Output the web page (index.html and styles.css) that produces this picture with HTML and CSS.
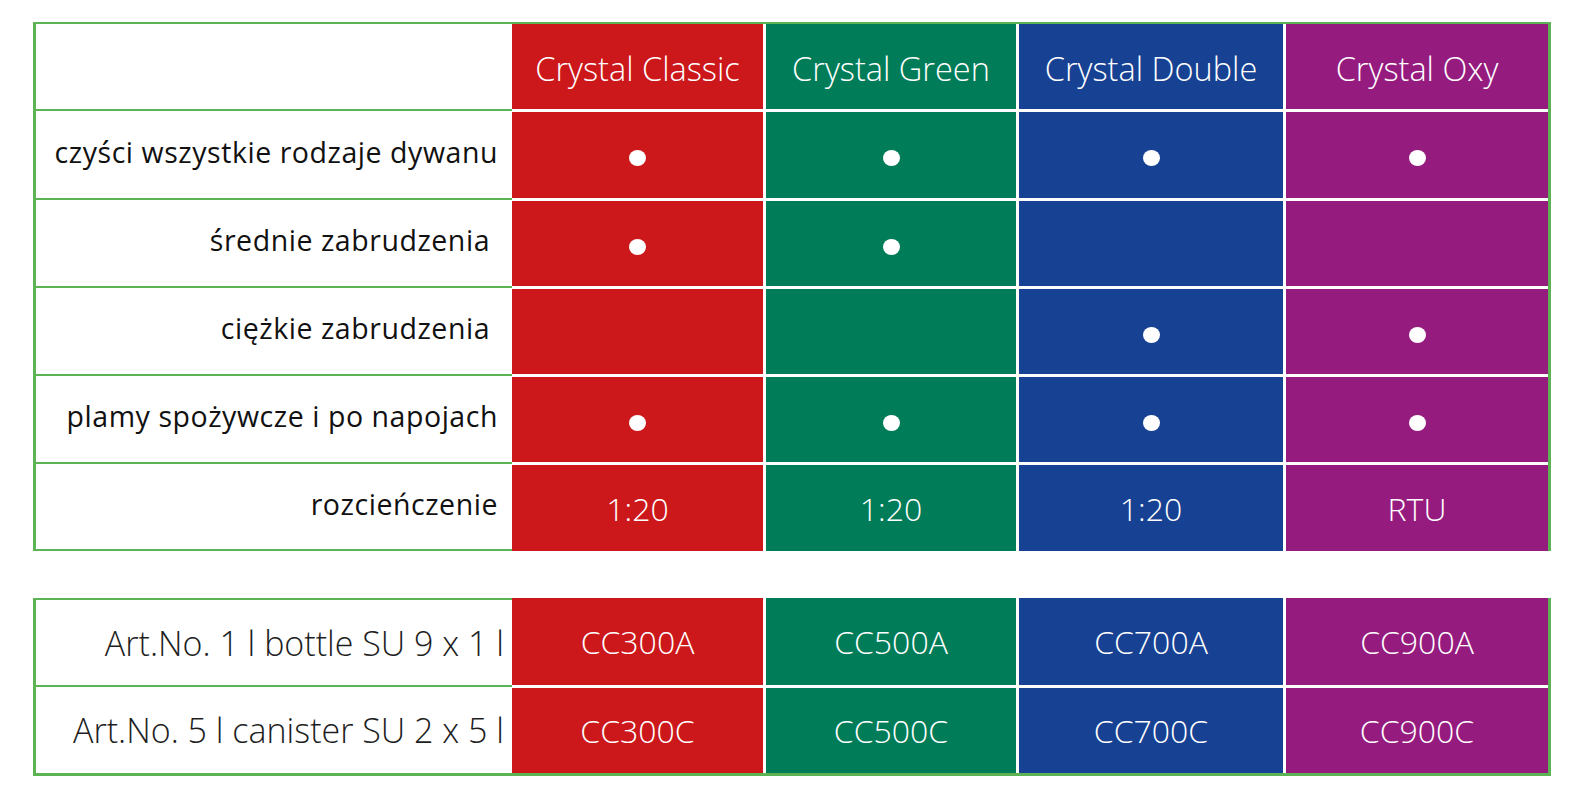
FILE: index.html
```html
<!DOCTYPE html>
<html lang="pl">
<head>
<meta charset="utf-8">
<title>Crystal</title>
<link rel="stylesheet" href="styles.css">
</head>
<body>
<div class="page">
  <div class="tbl tbl-top">
    <div class="row">
      <div class="cell label"></div>
      <div class="cell head red">Crystal Classic</div>
      <div class="cell head green">Crystal Green</div>
      <div class="cell head blue">Crystal Double</div>
      <div class="cell head purple">Crystal Oxy</div>
    </div>
    <div class="row">
      <div class="cell label">czyści wszystkie rodzaje dywanu</div>
      <div class="cell red"><span class="dot"></span></div>
      <div class="cell green"><span class="dot"></span></div>
      <div class="cell blue"><span class="dot"></span></div>
      <div class="cell purple"><span class="dot"></span></div>
    </div>
    <div class="row">
      <div class="cell label">średnie zabrudzenia&nbsp;</div>
      <div class="cell red"><span class="dot"></span></div>
      <div class="cell green"><span class="dot"></span></div>
      <div class="cell blue"></div>
      <div class="cell purple"></div>
    </div>
    <div class="row">
      <div class="cell label">ciężkie zabrudzenia&nbsp;</div>
      <div class="cell red"></div>
      <div class="cell green"></div>
      <div class="cell blue"><span class="dot"></span></div>
      <div class="cell purple"><span class="dot"></span></div>
    </div>
    <div class="row">
      <div class="cell label">plamy spożywcze i po napojach</div>
      <div class="cell red"><span class="dot"></span></div>
      <div class="cell green"><span class="dot"></span></div>
      <div class="cell blue"><span class="dot"></span></div>
      <div class="cell purple"><span class="dot"></span></div>
    </div>
    <div class="row last">
      <div class="cell label">rozcieńczenie</div>
      <div class="cell val red">1:20</div>
      <div class="cell val green">1:20</div>
      <div class="cell val blue">1:20</div>
      <div class="cell val purple">RTU</div>
    </div>
  </div>

  <div class="tbl tbl-bottom">
    <div class="row first">
      <div class="cell label art">Art.No. 1 l bottle SU 9 x 1 l</div>
      <div class="cell val red">CC300A</div>
      <div class="cell val green">CC500A</div>
      <div class="cell val blue">CC700A</div>
      <div class="cell val purple">CC900A</div>
    </div>
    <div class="row">
      <div class="cell label art">Art.No. 5 l canister SU 2 x 5 l</div>
      <div class="cell val red">CC300C</div>
      <div class="cell val green">CC500C</div>
      <div class="cell val blue">CC700C</div>
      <div class="cell val purple">CC900C</div>
    </div>
  </div>
</div>
</body>
</html>
```

FILE: styles.css
```css
html, body {
  margin: 0;
  padding: 0;
  background: #ffffff;
}

.page {
  padding: 22px 0 0 33px;
}

.tbl {
  display: grid;
  box-sizing: border-box;
  width: 1518px;
  grid-template-columns: 479px 251px 253px 267px 265px;
  border-right: 3px solid #5cb353;
}

.tbl-top {
  border-top: 2px solid #5cb353;
  grid-template-rows: 85px 89px 88px 88px 88px 89px;
}

.tbl-bottom {
  margin-top: 47px;
  border-bottom: 3px solid #5cb353;
  grid-template-rows: 87px 88px;
}

.row {
  display: contents;
}

.cell {
  box-sizing: border-box;
  display: flex;
  align-items: center;
  justify-content: center;
  font-family: "Open Sans", "Liberation Sans", sans-serif;
  font-weight: 300;
  font-size: 32px;
  color: #ffffff;
  white-space: nowrap;
}

.head {
  font-size: 32.5px;
  padding-top: 4px;
}

.label {
  justify-content: flex-end;
  background: #ffffff;
  border-left: 3px solid #5cb353;
  padding: 0 14px 6px 0;
  font-weight: 500;
  font-size: 28.5px;
  letter-spacing: 0.55px;
  color: #111111;
}

.label.art {
  padding: 0 8px 0 0;
  font-weight: 300;
  font-size: 34px;
  letter-spacing: 0;
  color: #1e1e1e;
}

.red { background: #cc171b; }
.green { background: #007c58; border-left: 3px solid #ffffff; }
.blue { background: #174192; border-left: 3px solid #ffffff; }
.purple { background: #951b7f; border-left: 3px solid #ffffff; }

.row + .row > .cell {
  border-top: 3px solid #ffffff;
}

.row + .row > .label {
  border-top: 2px solid #5cb353;
}

.row.first > .label {
  border-top: 2px solid #5cb353;
}

.row.last > .label {
  border-bottom: 2px solid #5cb353;
}

.dot {
  display: block;
  width: 17px;
  height: 16px;
  margin-top: 6px;
  border-radius: 50%;
  background: #ffffff;
}
```
